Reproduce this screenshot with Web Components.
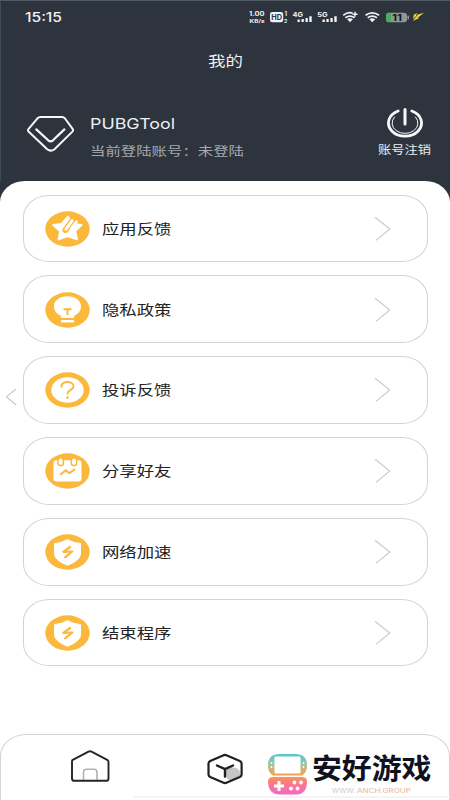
<!DOCTYPE html>
<html lang="zh-CN">
<head>
<meta charset="utf-8">
<title>我的</title>
<style>
html,body{margin:0;height:100%;overflow:hidden;background:#fff}
body{font-family:"Noto Sans CJK SC",sans-serif}
</style>
</head>
<body>
<profile-app></profile-app>
<script>
const define=(name,html)=>customElements.define(name,class extends HTMLElement{
  connectedCallback(){
    if(this.shadowRoot)return;
    const t=document.createElement('template');
    t.innerHTML=typeof html==='function'?html(this):html;
    this.attachShadow({mode:'open'}).append(t.content.cloneNode(true));
  }
});

/* Text set to an exact advance width: label, w, h, base (baseline), size */
define('wide-text',e=>{
  const a=n=>e.getAttribute(n);
  return `<style>:host{display:block;flex:none;width:${a('w')}px;height:${a('h')}px}
  svg{display:block;overflow:visible}
  text{font-family:${a('font')||'"Noto Sans CJK SC",sans-serif'};font-size:${a('size')}px;font-weight:${a('weight')||400};fill:currentColor}</style>
  <svg width="${a('w')}" height="${a('h')}"><text x="0" y="${a('base')}" textLength="${a('w')}" lengthAdjust="spacingAndGlyphs">${a('label')}</text></svg>`;
});

define('status-bar',`<style>
:host{display:flex;height:34px;padding:0 25px;box-sizing:border-box;justify-content:space-between;color:#f1f3f5}
wide-text{margin-top:9px}
svg{display:block;margin-top:8px}
text{font-family:Inter,"Noto Sans CJK SC",sans-serif;font-weight:700;fill:currentColor}
</style>
<wide-text label="15:15" w="37" h="16" base="12.6" size="13" weight="500" font="Inter,sans-serif"></wide-text>
<svg width="177" height="20" viewBox="248 8 177 20">
<text x="249" y="16.3" font-size="5.7" textLength="15.5" lengthAdjust="spacingAndGlyphs">1.00</text>
<text x="249.5" y="22.8" font-size="5" textLength="15" lengthAdjust="spacingAndGlyphs">KB/s</text>
<rect x="270" y="12" width="13.2" height="10.3" rx="2.4" fill="#f1f3f5"/>
<text x="271.2" y="19.9" font-size="7.5" textLength="10.8" lengthAdjust="spacingAndGlyphs" style="fill:#2e343d">HD</text>
<text x="284.6" y="16.3" font-size="5.7">1</text><text x="284" y="22.8" font-size="5.2">2</text>
<text x="292.5" y="16.9" font-size="6.6" textLength="10.5" lengthAdjust="spacingAndGlyphs">4G</text>
<text x="317.3" y="16.9" font-size="6.6" textLength="10.5" lengthAdjust="spacingAndGlyphs">5G</text>
<g fill="#f1f3f5"><path d="M297.5 19.5h2.3v2.6h-2.3zM301.5 19h2.3v3.1h-2.3zM305.5 18h2.3v4.1h-2.3zM309.3 16.3h2.4v5.8h-2.4zM322.5 19.5h2.3v2.6h-2.3zM326.4 19h2.3v3.1h-2.3zM330.4 18h2.3v4.1h-2.3zM334.3 16.3h2.4v5.8h-2.4z"/></g>
<g fill="none" stroke="#f1f3f5" stroke-width="1.7"><path d="M365.5 15.3q6.800-5 13.600 0M367.700 17.700q4.600-3.200 9.200 0"/><path d="M369.400 19.200q2.900-1.800 5.800 0l-2.900 3z" fill="#f1f3f5" stroke="none"/>
<path d="M343.200 15.300q5-4 9.500-2M345.400 17.700q4.600-3.200 9.200 0"/><path d="M347.100 19.200q2.900-1.800 5.800 0l-2.900 3z" fill="#f1f3f5" stroke="none"/><path d="M355 11.800v5M352.500 14.300h5" stroke-width="1.400"/></g>
<rect x="386" y="12.7" width="21" height="9.6" rx="3" fill="#919698"/><path d="M389 12.7h2v9.6h-2a3 3 0 0 1-3-3v-3.6a3 3 0 0 1 3-3z" fill="#47ad5c"/><rect x="407.5" y="15.5" width="1.5" height="4" rx=".7" fill="#919698"/>
<text x="392" y="20.800" font-size="9" textLength="10" lengthAdjust="spacingAndGlyphs" style="fill:#14191d">11</text>
<path d="M424 12.800L417.800 14.500 412.800 21 419 18.200 418 17.600zM413 19l.8-4.200 3.400-1.900-1.500 3.600z" fill="#ead33d"/>
</svg>`);

define('profile-header',`<style>
:host{display:flex;height:181px;flex-direction:column;background:#2e343d;color:#edf0f2;box-shadow:inset 0 1px #515b63,inset 1px 0 #414b53}
.title{display:flex;justify-content:center;padding-top:17px;height:35px}
.row{display:flex;height:95px;padding:0 19px 0 26px}
.names{display:flex;flex-direction:column;margin-left:16px;padding-top:29px;gap:10px}
.sub{color:#a4a9ae}.out{display:flex;flex-direction:column;align-items:center;margin-left:auto;padding-top:19px;gap:3.500px}
.gem{margin-top:26px}
</style>
<status-bar></status-bar>
<div class="title"><wide-text label="我的" w="35" h="20" base="14.5" size="13.8"></wide-text></div>
<div class="row">
<svg class="gem" width="48" height="42" viewBox="26 112 48 42" fill="none" stroke="#f5f7f8" stroke-linejoin="round" stroke-linecap="round"><path d="M40.500 117H62Q63.700 117 65 118.500L72.600 128.800Q73.600 130.300 72.400 131.600L54.500 149.200Q50.800 152 47.200 149.200L28.800 131.800Q27.400 130.400 28.600 128.900L37.500 118.300Q38.700 117 40.500 117Z" stroke-width="2"/><path d="M36.3 129.4L48.2 140.3Q50.7 142.2 53 140.3L64.4 129.4" stroke-width="2.2"/></svg>
<div class="names"><wide-text label="PUBGTool" w="85" h="20" base="14.2" size="14.5" font="Inter,sans-serif"></wide-text><wide-text class="sub" label="当前登陆账号：未登陆" w="154" h="18" base="11" size="12.300"></wide-text></div>
<div class="out"><svg width="38" height="34" viewBox="386 105 38 34" fill="none" stroke="#f7f8f9" stroke-linecap="round"><path d="M398.1 111A16.500 13.200 0 1 0 411.9 111" stroke-width="2.8"/><path d="M394.5 117A13 10.3 0 1 0 415.5 117" stroke-width="1"/><path d="M405 109.5V124" stroke-width="3"/></svg><wide-text label="账号注销" w="53" h="16" base="10.6" size="11"></wide-text></div>
</div>`);

const icons={
star:'<path d="M22.5 5.8l4 7 9.500 1.300-6.500 6 2 8.300-9.200-3.300-9.200 3.300 1.500-8.300-6.900-6.100 8-.9z" fill="#fff" stroke="#fff" stroke-width="2" stroke-linejoin="round"/><path d="M20 19l8.500-11.500" stroke="#fbb83b" stroke-width="6" stroke-linecap="round"/><path d="M20.5 18.2l6.300-8.600" stroke="#fff" stroke-width="3" stroke-linecap="round"/><path d="M25.500 17.500l5.800-7.200" stroke="#fff" stroke-width="2.200" stroke-linecap="round"/>',
bulb:'<path d="M22 4.300c8.300 0 13.500 4.400 13.500 10.200 0 4.600-3.200 7.700-6.500 8.900L28.400 26H15.800l-.9-2.600c-3.300-1.200-6.500-4.300-6.500-8.900 0-5.800 5.300-10.200 13.600-10.200z" fill="#fff"/><path d="M16.500 29.200h11" stroke="#fff" stroke-width="2.4" stroke-linecap="round"/><path d="M18.800 17.300h6.400M22 17.600v4.600" stroke="#fbb83b" stroke-width="2" stroke-linecap="round"/>',
help:'<ellipse cx="22" cy="18" rx="16.2" ry="12.8" fill="#fff"/><path d="M15.8 14.5C15.7 8.500 28 8.500 28 14.2c0 3.800-6 3.600-6 7.500" fill="none" stroke="#fbb83b" stroke-width="1.900" stroke-linecap="round"/><circle cx="22" cy="25.6" r="1.300" fill="#fbb83b"/>',
plan:'<rect x="8" y="7.3" width="28" height="21.3" rx="3" fill="#fff"/><g fill="#fff" stroke="#fbb83b" stroke-width="1.5"><rect x="12.5" y="4.800" width="5.4" height="7.800" rx="2.7"/><rect x="25.8" y="4.800" width="5.4" height="7.800" rx="2.7"/></g><path d="M15.3 21.2l5-4 3.5 3 5-3.6" fill="none" stroke="#fbb83b" stroke-width="2.1" stroke-linecap="round" stroke-linejoin="round"/>',
shield:'<path d="M22 5.5q6 3.7 13 4v10.3q0 6.4-13 11.5-13-5.1-13-11.500V9.500q7-.3 13-4z" fill="#fff" stroke="#fff" stroke-linejoin="round"/><path d="M24.600 13l-6.800 4.900 9-.4-7.200 5.900" fill="none" stroke="#fbb83b" stroke-width="2.2" stroke-linecap="round" stroke-linejoin="round"/>'};

define('menu-card',e=>`<style>
:host{display:flex;box-sizing:border-box;height:67.4px;align-items:center;border:1.2px solid #d3d3d3;border-radius:26px / 22px;padding:.8px 36px 0 21.500px;color:#222;background:#fff}
wide-text{margin-left:11.800px}.arrow{margin-left:auto}svg{display:block}
</style>
<svg width="45" height="36" viewBox="-.5 0 45 36"><ellipse cx="22" cy="18" rx="22.2" ry="17.7" fill="#fbb83b"/>${icons[e.getAttribute('icon')]}</svg>
<wide-text label="${e.getAttribute('label')}" w="69.5" h="20" base="15" size="14.2"></wide-text>
<svg class="arrow" width="17" height="26" viewBox="0 0 17 26" fill="none" stroke="#c9c9c9" stroke-width="1.1"><path d="M1 1.3L15.800 13 2 24.400"/></svg>`);

define('tab-bar',`<style>
:host{display:flex;box-sizing:border-box;height:66px;border:1px solid #d4d4d4;border-bottom:0;border-radius:26px 26px 0 0 / 22px 22px 0 0;padding:13px 0 0 69px;background:#fff}
.cube{margin-left:97px}svg{display:block;flex:none}
</style>
<svg width="40" height="35" viewBox="70 748 40 35" fill="none"><path d="M83.5 779.8V772q0-2.800 3-2.800H94q3 0 3 2.800v7.800" stroke="#b1b1b1" stroke-width="1.6"/><path d="M72.3 760.2L88.5 751.6Q90 750.8 91.5 751.6L107.7 760.2Q108.5 760.8 108.5 762V778.4Q108.5 780.8 106 780.8H74.5Q72 780.8 72 778.4V762Q72 760.8 72.3 760.2Z" stroke="#252525" stroke-width="1.9" stroke-linejoin="round"/></svg>
<svg class="cube" width="36" height="37" viewBox="207 748 36 37" fill="none" stroke="#202020" stroke-linecap="round" stroke-linejoin="round"><path d="M226 770.5q1-3 6-3 8 0 8 5.500v3l-8 4q-6 .5-6-5z" fill="#c5c5c5" stroke="none"/><path d="M223 755.4Q225 754.4 227 755.4L239.8 761Q241.6 762 241.6 763.5V774.5Q241.6 776 239.8 777L227 782.6Q225 783.5 223 782.6L210.2 777Q208.5 776 208.5 774.5V763.5Q208.5 762 210.2 761Z" stroke-width="2.2"/><path d="M217 765.5l8 3.600 8-3.600M225 769.1v7.4" stroke-width="2.4"/></svg>`);

define('site-mark',`<style>
:host{display:flex;position:absolute;left:266px;top:751px;width:172px;height:49px}
svg{display:block;overflow:visible}.words{margin-left:3px}
text{font-family:"Noto Sans CJK SC",sans-serif}
.url{font-family:Inter,sans-serif;font-size:6px}
</style>
<svg width="43" height="46" viewBox="266 751 43 46"><defs><linearGradient id="g" gradientUnits="userSpaceOnUse" x1="0" y1="754" x2="0" y2="795"><stop offset="0" stop-color="#52c4d1"/><stop offset=".25" stop-color="#a3c4a2"/><stop offset=".5" stop-color="#f9a24c"/><stop offset=".7" stop-color="#fa7b7e"/><stop offset="1" stop-color="#f366cf"/></linearGradient></defs>
<path d="M280 754h15q12 0 12 11v1.500q0 5.500-5 9H273Q268 772 268 766.500V765q0-11 12-11zM268 781q.5-4 5-4h29q5 0 5 4 0 13.500-11 13.500H280q-12 0-12-13.500z" fill="url(#g)"/>
<rect x="274.500" y="756.500" width="26" height="17" rx="1" fill="#fff"/><g fill="#fff"><circle cx="271.500" cy="763" r=".9"/><circle cx="271.500" cy="767" r=".9"/><circle cx="303.500" cy="763" r=".9"/><circle cx="303.500" cy="767" r=".9"/><circle cx="294.500" cy="782.500" r="1.900"/><circle cx="301" cy="782.500" r="1.900"/><circle cx="291" cy="788.500" r="1.900"/><circle cx="297.500" cy="788.500" r="1.900"/></g><path d="M279 781v10M274 786h10" stroke="#fff" stroke-width="3"/></svg>
<svg class="words" width="120" height="49"><text x="0" y="27.500" font-size="28.500" font-weight="700" textLength="119.500" lengthAdjust="spacingAndGlyphs" fill="#10121f">安好游戏</text>
<text class="url" x="20" y="42.200" fill="#cfcbc0" textLength="23" lengthAdjust="spacingAndGlyphs">WWW.</text><text class="url" x="45" y="42.200" fill="#e6b4a0" textLength="54" lengthAdjust="spacingAndGlyphs">ANCH.GROUP</text></svg>`);

define('profile-app',`<style>
:host{display:flex;position:relative;flex-direction:column;width:450px;height:800px;background:#2e343d}
main{display:flex;flex-direction:column;flex:1;box-sizing:border-box;background:#fff;border-radius:25px 25px 0 0 / 21px 21px 0 0}
.list{display:grid;gap:13.5px;padding:13.6px 22.5px 0}
tab-bar{margin-top:auto}
.back{position:absolute;left:5px;top:387px}
.line{position:absolute;left:134px;top:796px;width:316px;height:2px;background:#f4f4f4}
</style>
<profile-header></profile-header>
<main><div class="list">
<menu-card icon="star" label="应用反馈"></menu-card><menu-card icon="bulb" label="隐私政策"></menu-card><menu-card icon="help" label="投诉反馈"></menu-card><menu-card icon="plan" label="分享好友"></menu-card><menu-card icon="shield" label="网络加速"></menu-card><menu-card icon="shield" label="结束程序"></menu-card></div>
<tab-bar></tab-bar></main>
<svg class="back" width="12" height="20" fill="none" stroke="#c9c9c9" stroke-width="1.1"><path d="M11 2L1.5 9.7 11 18"/></svg>
<div class="line"></div><site-mark></site-mark>`);
</script>
</body>
</html>
